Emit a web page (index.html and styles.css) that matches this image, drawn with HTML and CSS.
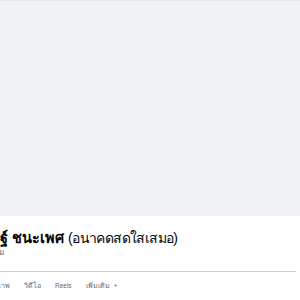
FILE: index.html
```html
<!DOCTYPE html>
<html lang="th">
<head>
<meta charset="utf-8">
<link rel="stylesheet" href="styles.css">
</head>
<body>
<div class="cover"></div>
<div class="profile">
  <h1 class="name"><span class="main">ฐ์ ชนะเพศ</span> <span class="alt">(อนาคดสดใสเสมอ)</span></h1>
  <div class="sub">ม</div>
  <div class="divider"></div>
  <nav class="tabs">
    <span class="tab first">ภาพ</span>
    <span class="tab">วิดีโอ</span>
    <span class="tab reels">Reels</span>
    <span class="tab">เพิ่มเติม <span class="caret">▼</span></span>
  </nav>
</div>
</body>
</html>
```
FILE: styles.css
```css
html, body {
  margin: 0;
  padding: 0;
  background: #ffffff;
  font-family: "Liberation Sans", "Noto Sans", "DejaVu Sans", sans-serif;
  overflow: hidden;
}
.cover {
  height: 216px;
  background: #f0f2f5;
  border-top: 1px solid #e4e6ea;
  box-sizing: border-box;
}
.name {
  margin: 0;
  padding-top: 13px;
  font-size: 14.5px;
  line-height: 18px;
  color: #050505;
  white-space: nowrap;
}
.name .main {
  font-weight: 700;
}
.name .alt {
  font-weight: 400;
  font-size: 14px;
  letter-spacing: -0.6px;
}
.sub {
  font-size: 8px;
  line-height: 12px;
  color: #65676b;
  margin-left: -1px;
}
.divider {
  height: 1px;
  background: #ced0d4;
  margin: 12px 4px 0 0;
}
.tabs {
  display: flex;
  gap: 14px;
  padding-top: 9px;
  font-size: 7px;
  line-height: 10px;
  color: #65676b;
  white-space: nowrap;
}
.tab.first {
  margin-left: -4px;
}
.tab.reels {
  font-size: 6.5px;
}
.caret {
  font-size: 4px;
  vertical-align: 1px;
  margin-left: 2px;
}
```
